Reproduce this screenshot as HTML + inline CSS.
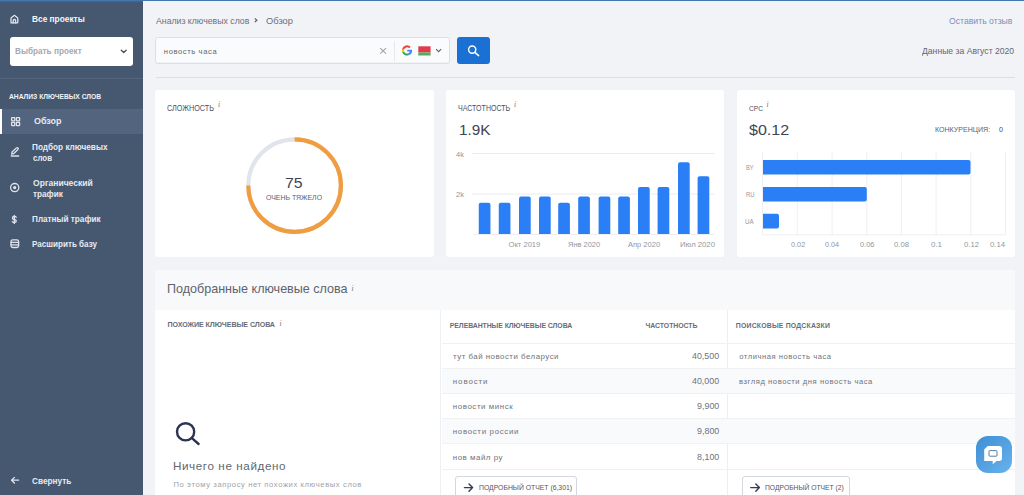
<!DOCTYPE html>
<html lang="ru">
<head>
<meta charset="utf-8">
<title>Обзор — Анализ ключевых слов</title>
<style>
*{box-sizing:border-box;margin:0;padding:0}
html,body{width:1024px;height:495px;overflow:hidden}
body{background:#f2f3f7;font-family:"Liberation Sans",sans-serif;position:relative}
.abs{position:absolute}
.t{position:absolute;white-space:nowrap;line-height:1;transform-origin:0 0}
#topline{left:0;top:0;width:1024px;height:1px;background:#4576b0;z-index:5}
#topline2{left:143px;top:1px;width:881px;height:1.5px;background:#e9f4fb;z-index:5}
#topline3{left:0;top:1px;width:143px;height:2px;background:linear-gradient(#3f68a0,#45556f);z-index:5}
#sidebar{left:0;top:0;width:143px;height:495px;background:#465770}
#sel{left:10px;top:37px;width:123px;height:28.5px;background:#fff;border-radius:3px}
#sdiv{left:0;top:77.5px;width:143px;height:1px;background:#55647e}
#active{left:0;top:108.5px;width:143px;height:25px;background:#53647e}
#activebar{left:0;top:108.5px;width:2px;height:25px;background:#fff}
#input{left:155.4px;top:37px;width:294.6px;height:27px;background:#fafbfc;border:1.4px solid #dcdfe4;border-radius:2.5px;box-shadow:inset 0 -1px 0 #f0f1f4}
#isep{left:394px;top:40.5px;width:1px;height:20px;background:#e6e8ec}
#sbtn{left:457px;top:36.8px;width:33px;height:27.6px;background:#1b71d3;border-radius:3px}
#hdiv{left:156px;top:76.5px;width:859px;height:1px;background:#dcdee3}
.card{position:absolute;top:89.5px;height:167.5px;background:#fff;border-radius:3px}
#card1{left:155px;width:279px}
#card2{left:445.5px;width:278.5px}
#card3{left:736.5px;width:278.5px}
#panel{left:155px;top:270px;width:860px;height:240px;background:#fff;border-radius:3px 3px 0 0}
#phead{left:155px;top:270px;width:860px;height:39.5px;background:#f8f9fb;border-radius:3px 3px 0 0}
#pv1{left:440px;top:309.5px;width:1.3px;height:200px;background:#eff0f3}
#pv2{left:726.8px;top:309.5px;width:1px;height:200px;background:#eceef2}
.row{position:absolute;height:25.2px}
.rg{background:#f9fafb}
.rl{position:absolute;height:1px;background:#f0f1f3}
.btn{position:absolute;top:476px;height:25px;border:1px solid #d3d7de;border-radius:3px;background:#fff}
#chat{left:975.8px;top:436.3px;width:36.4px;height:36.4px;border-radius:12px;background:linear-gradient(135deg,#3f8ed6,#67b3ec)}
svg{position:absolute;overflow:visible}
</style>
</head>
<body>
<div id="sidebar" class="abs"></div>
<div id="topline" class="abs"></div>
<div id="topline2" class="abs"></div>
<div id="topline3" class="abs"></div>
<div id="sel" class="abs"></div>
<div id="sdiv" class="abs"></div>
<div id="active" class="abs"></div>
<div id="activebar" class="abs"></div>

<!-- sidebar icons -->
<svg style="left:0;top:0" width="143" height="495" viewBox="0 0 143 495">
  <g fill="none" stroke="#dfe4ec" stroke-width="1.3" stroke-linecap="round" stroke-linejoin="round">
    <!-- home -->
    <path d="M11 22.9 V18.7 Q11 18 11.6 17.5 L13.8 15.7 Q14.4 15.2 15 15.7 L17.2 17.5 Q17.8 18 17.8 18.7 V22.3 Q17.8 22.9 17.2 22.9 H11.6 Q11 22.9 11 22.3"/>
    <path d="M13.2 22.9 V20.4 Q13.2 19.4 14.4 19.4 Q15.6 19.4 15.6 20.4 V22.9"/>
    <!-- chevron select -->
    <path d="M121.3 50.3 L123.7 52.6 L126.1 50.3" stroke="#4b4f58" stroke-width="1.4"/>
    <!-- grid -->
    <rect x="11.6" y="117.6" width="3.2" height="3.2" rx="0.6"/>
    <rect x="16.4" y="117.6" width="3.2" height="3.2" rx="0.6"/>
    <rect x="11.6" y="122.4" width="3.2" height="3.2" rx="0.6"/>
    <rect x="16.4" y="122.4" width="3.2" height="3.2" rx="0.6"/>
    <!-- pencil -->
    <path d="M11.6 154.2 L12.1 152 L16.4 147.9 Q17.3 147.2 18 148 Q18.6 148.8 17.9 149.5 L13.6 153.7 Z"/>
    <path d="M11.3 156 H18.6" stroke-width="1.5"/>
    <!-- circle -->
    <circle cx="14.7" cy="187.6" r="4.1"/>
    <circle cx="14.7" cy="187.6" r="1" fill="#dfe4ec"/>
    <!-- dollar -->
    <path d="M16.2 217.3 Q15.8 216.5 14.3 216.5 Q12.4 216.5 12.4 218 Q12.4 219.2 14.3 219.5 Q16.3 219.8 16.3 221.1 Q16.3 222.5 14.3 222.5 Q12.7 222.5 12.3 221.7"/>
    <path d="M14.3 215.4 V223.4"/>
    <!-- database -->
    <rect x="11" y="239.8" width="7.6" height="7.7" rx="1.8"/>
    <path d="M11 242.4 H18.6 M11 244.9 H18.6"/>
    <!-- back arrow -->
    <path d="M18.6 480.2 H11.6 M14.4 477.4 L11.6 480.2 L14.4 483"/>
  </g>
</svg>

<div id="input" class="abs"></div>
<div id="isep" class="abs"></div>
<div id="sbtn" class="abs"></div>
<svg style="left:0;top:0" width="1024" height="100" viewBox="0 0 1024 100">
  <!-- breadcrumb chevron -->
  <path d="M254.8 18.4 L256.9 20.2 L254.8 22" fill="none" stroke="#5d616a" stroke-width="1.2"/>
  <!-- clear x -->
  <path d="M380.2 48.1 L386 53.6 M386 48.1 L380.2 53.6" stroke="#a3a6ad" stroke-width="1.2"/>
  <!-- google G -->
  <g transform="translate(407 50.45)" fill="none" stroke-width="2">
    <path d="M4.1 -0.2 A4.1 4.1 0 0 1 1.3 3.9" stroke="#4285f4"/>
    <path d="M1.3 3.9 A4.1 4.1 0 0 1 -3.9 1.3" stroke="#34a853"/>
    <path d="M-3.9 1.3 A4.1 4.1 0 0 1 -3.9 -1.3" stroke="#fbbc05"/>
    <path d="M-3.9 -1.3 A4.1 4.1 0 0 1 2.9 -2.9" stroke="#ea4335"/>
    <path d="M0.2 0.2 H4.9" stroke="#4285f4" stroke-width="1.7"/>
  </g>
  <!-- flag BY -->
  <rect x="418.3" y="46.3" width="12.3" height="6.2" fill="#e33a4c"/>
  <rect x="418.3" y="52.5" width="12.3" height="3" fill="#52ad5c"/>
  <!-- chevron -->
  <path d="M436.1 49.2 L438.6 51.6 L441.1 49.2" fill="none" stroke="#5f636b" stroke-width="1.15"/>
  <!-- search icon white -->
  <circle cx="472.2" cy="49.6" r="3.6" fill="none" stroke="#fff" stroke-width="1.4"/>
  <path d="M474.9 52.4 L478.6 55.6" stroke="#fff" stroke-width="1.5" stroke-linecap="round"/>
</svg>
<div id="hdiv" class="abs"></div>

<div id="card1" class="card"></div>
<div id="card2" class="card"></div>
<div id="card3" class="card"></div>

<svg style="left:0;top:0" width="1024" height="270" viewBox="0 0 1024 270">
  <!-- info i's -->
  <g fill="#6b6f78" font-family="Liberation Serif" font-style="italic" font-size="7.5">
    <text x="218" y="107">i</text>
    <text x="514" y="107">i</text>
    <text x="766.5" y="107">i</text>
  </g>
  <!-- ring -->
  <circle cx="294.6" cy="185.6" r="46.3" fill="none" stroke="#e1e4ed" stroke-width="4.2"/>
  <path d="M294.6 139.3 A46.3 46.3 0 1 1 248.3 185.6" fill="none" stroke="#f09c3f" stroke-width="4.2"/>
  <!-- card2 grid -->
  <g stroke="#ebecef" stroke-width="1">
    <path d="M472 153.5 H714.5"/>
    <path d="M472 194.1 H714.5"/>
    <path d="M473.7 234.4 H714.5"/>
  </g>
  <g fill="#2b7ff6" id="bars">
  </g>
  <!-- card3 grid -->
  <g stroke="#eeeff2" stroke-width="1">
    <path d="M762.5 152.5 V234.8"/>
    <path d="M797.3 152.5 V234.8"/>
    <path d="M832.1 152.5 V234.8"/>
    <path d="M866.8 152.5 V234.8"/>
    <path d="M901.4 152.5 V234.8"/>
    <path d="M936.1 152.5 V234.8"/>
    <path d="M970.8 152.5 V234.8"/>
    <path d="M1005.5 152.5 V234.8"/>
    <path d="M762.5 234.8 H1005.5"/>
  </g>
  <g fill="#2b7ff6">
    <path d="M763 160 H968.5 Q970.5 160 970.5 162 V172.6 Q970.5 174.6 968.5 174.6 H763 Z"/>
    <path d="M763 186.9 H864.8 Q866.8 186.9 866.8 188.9 V199.5 Q866.8 201.5 864.8 201.5 H763 Z"/>
    <path d="M763 213.8 H777 Q779 213.8 779 215.8 V226.4 Q779 228.4 777 228.4 H763 Z"/>
  </g>
  <path fill="#2b7ff6" d="M478.75 234.00 V204.75 Q478.75 202.75 480.75 202.75 H488.45 Q490.45 202.75 490.45 204.75 V234.00 Z"/>
<path fill="#2b7ff6" d="M498.75 234.00 V204.75 Q498.75 202.75 500.75 202.75 H508.45 Q510.45 202.75 510.45 204.75 V234.00 Z"/>
<path fill="#2b7ff6" d="M519.00 234.00 V198.50 Q519.00 196.50 521.00 196.50 H528.70 Q530.70 196.50 530.70 198.50 V234.00 Z"/>
<path fill="#2b7ff6" d="M539.00 234.00 V198.50 Q539.00 196.50 541.00 196.50 H548.70 Q550.70 196.50 550.70 198.50 V234.00 Z"/>
<path fill="#2b7ff6" d="M558.20 234.00 V204.75 Q558.20 202.75 560.20 202.75 H567.90 Q569.90 202.75 569.90 204.75 V234.00 Z"/>
<path fill="#2b7ff6" d="M578.20 234.00 V198.50 Q578.20 196.50 580.20 196.50 H587.90 Q589.90 196.50 589.90 198.50 V234.00 Z"/>
<path fill="#2b7ff6" d="M598.60 234.00 V198.50 Q598.60 196.50 600.60 196.50 H608.30 Q610.30 196.50 610.30 198.50 V234.00 Z"/>
<path fill="#2b7ff6" d="M618.20 234.00 V198.50 Q618.20 196.50 620.20 196.50 H627.90 Q629.90 196.50 629.90 198.50 V234.00 Z"/>
<path fill="#2b7ff6" d="M638.00 234.00 V188.90 Q638.00 186.90 640.00 186.90 H647.70 Q649.70 186.90 649.70 188.90 V234.00 Z"/>
<path fill="#2b7ff6" d="M657.60 234.00 V188.90 Q657.60 186.90 659.60 186.90 H667.30 Q669.30 186.90 669.30 188.90 V234.00 Z"/>
<path fill="#2b7ff6" d="M678.00 234.00 V164.30 Q678.00 162.30 680.00 162.30 H687.70 Q689.70 162.30 689.70 164.30 V234.00 Z"/>
<path fill="#2b7ff6" d="M697.60 234.00 V178.25 Q697.60 176.25 699.60 176.25 H707.30 Q709.30 176.25 709.30 178.25 V234.00 Z"/>
</svg>

<div id="panel" class="abs"></div>
<div id="phead" class="abs"></div>
<div id="pv1" class="abs"></div>
<div id="pv2" class="abs"></div>
<div class="row" style="left:441.5px;top:343.0px;width:573.5px"></div>
<div class="row rg" style="left:441.5px;top:368.2px;width:573.5px"></div>
<div class="row" style="left:441.5px;top:393.4px;width:573.5px"></div>
<div class="row rg" style="left:441.5px;top:418.6px;width:573.5px"></div>
<div class="row" style="left:441.5px;top:443.8px;width:573.5px"></div>
<div class="rl" style="left:441.5px;top:342.5px;width:573.5px"></div>
<div class="rl" style="left:441.5px;top:367.7px;width:573.5px"></div>
<div class="rl" style="left:441.5px;top:392.9px;width:573.5px"></div>
<div class="rl" style="left:441.5px;top:418.1px;width:573.5px"></div>
<div class="rl" style="left:441.5px;top:443.3px;width:573.5px"></div>
<div class="rl" style="left:441.5px;top:468.5px;width:573.5px"></div>
<div class="btn" style="left:454.8px;width:122.7px"></div>
<div class="btn" style="left:741.6px;width:108.4px"></div>
<svg style="left:0;top:270px" width="1024" height="225" viewBox="0 270 1024 225">
  <g fill="#6b6f78" font-family="Liberation Serif" font-style="italic" font-size="7.5">
    <text x="351.5" y="291">i</text>
    <text x="279.5" y="325.5">i</text>
  </g>
  <!-- empty search icon -->
  <circle cx="185.6" cy="431.8" r="8.6" fill="none" stroke="#2b3350" stroke-width="2.4"/>
  <path d="M191.9 438.2 L198.6 444" stroke="#2b3350" stroke-width="2.4" stroke-linecap="round"/>
  <!-- arrows -->
  <g fill="none" stroke="#333b55" stroke-width="1.4" stroke-linecap="round" stroke-linejoin="round">
    <path d="M464.4 487.6 H472.6 M469 484 L472.6 487.6 L469 491.2"/>
    <path d="M750.7 487.6 H759.4 M755.8 484 L759.4 487.6 L755.8 491.2"/>
  </g>
</svg>
<div id="chat" class="abs"></div>
<svg style="left:0;top:0" width="1024" height="495" viewBox="0 0 1024 495">
  <path d="M987.6 446 H999.3 Q1002 446 1002 448.7 V458.2 Q1002 460.9 999.3 460.9 H996.6 L992.7 464.2 V460.9 H984.2 V449.4 Z" fill="#fff"/>
  <rect x="989" y="450.6" width="8" height="5.6" rx="0.8" fill="none" stroke="#5b7ca3" stroke-width="1"/>
</svg>
<div class="t" id="s_all" style="left:32.43px;top:14.91px;font-size:8.60px;color:#f4f6fa;font-weight:700;transform:scaleX(0.9681)">Все проекты</div>
<div class="t" id="s_sel" style="left:15.02px;top:47.00px;font-size:8.80px;color:#a6a9b0;font-weight:700;transform:scaleX(0.9336)">Выбрать проект</div>
<div class="t" id="s_head" style="left:9.00px;top:93.41px;font-size:7.20px;color:#f1f3f7;font-weight:700;transform:scaleX(0.9318)">АНАЛИЗ КЛЮЧЕВЫХ СЛОВ</div>
<div class="t" id="s_obz" style="left:33.84px;top:117.41px;font-size:8.60px;color:#e6eaf0;font-weight:700;transform:scaleX(1.0410)">Обзор</div>
<div class="t" id="s_pod1" style="left:32.08px;top:143.25px;font-size:8.60px;color:#e6eaf0;font-weight:700;transform:scaleX(0.9554)">Подбор ключевых</div>
<div class="t" id="s_pod2" style="left:32.94px;top:154.20px;font-size:8.60px;color:#e6eaf0;font-weight:700;transform:scaleX(0.9250)">слов</div>
<div class="t" id="s_org1" style="left:32.86px;top:179.25px;font-size:8.60px;color:#e6eaf0;font-weight:700;transform:scaleX(0.9958)">Органический</div>
<div class="t" id="s_org2" style="left:32.95px;top:190.20px;font-size:8.60px;color:#e6eaf0;font-weight:700;transform:scaleX(0.9516)">трафик</div>
<div class="t" id="s_plat" style="left:32.01px;top:215.00px;font-size:8.60px;color:#e6eaf0;font-weight:700;transform:scaleX(0.9512)">Платный трафик</div>
<div class="t" id="s_ras" style="left:32.12px;top:240.00px;font-size:8.60px;color:#e6eaf0;font-weight:700;transform:scaleX(0.9416)">Расширить базу</div>
<div class="t" id="s_sv" style="left:31.78px;top:476.75px;font-size:8.60px;color:#e6eaf0;font-weight:700;transform:scaleX(0.9571)">Свернуть</div>
<div class="t" id="bc1" style="left:155.72px;top:16.01px;font-size:9.40px;color:#6c7078;font-weight:400;transform:scaleX(0.9300)">Анализ ключевых слов</div>
<div class="t" id="bc2" style="left:266.25px;top:16.01px;font-size:9.40px;color:#6b6f78;font-weight:400;transform:scaleX(0.9944)">Обзор</div>
<div class="t" id="fb" style="left:948.92px;top:16.01px;font-size:9.40px;color:#7d8fc0;font-weight:400;transform:scaleX(0.9233)">Оставить отзыв</div>
<div class="t" id="q" style="left:163.85px;top:48.21px;font-size:7.60px;color:#63676f;font-weight:400;letter-spacing:0.605px">новость часа</div>
<div class="t" id="date" style="left:922.18px;top:47.30px;font-size:9.20px;color:#62666e;font-weight:400;transform:scaleX(0.9376)">Данные за Август 2020</div>
<div class="t" id="c1t" style="left:166.81px;top:104.71px;font-size:8.20px;color:#4c5160;font-weight:400;transform:scaleX(0.8868)">СЛОЖНОСТЬ</div>
<div class="t" id="c1n" style="left:285.20px;top:176.11px;font-size:14.60px;color:#3e4457;font-weight:400;transform:scaleX(1.0874)">75</div>
<div class="t" id="c1s" style="left:265.75px;top:194.11px;font-size:7.00px;color:#5c6170;font-weight:400;transform:scaleX(0.9911)">ОЧЕНЬ ТЯЖЕЛО</div>
<div class="t" id="c2t" style="left:458.07px;top:105.11px;font-size:8.20px;color:#4c5160;font-weight:400;transform:scaleX(0.8611)">ЧАСТОТНОСТЬ</div>
<div class="t" id="c2n" style="left:458.50px;top:122.90px;font-size:14.00px;color:#3e4457;font-weight:400;transform:scaleX(1.0909)">1.9K</div>
<div class="t" id="c2y4" style="left:455.99px;top:150.91px;font-size:7.20px;color:#93969d;font-weight:400;transform:scaleX(1.0345)">4k</div>
<div class="t" id="c2y2" style="left:456.08px;top:191.25px;font-size:7.20px;color:#93969d;font-weight:400;transform:scaleX(1.0702)">2k</div>
<div class="t" id="c2x1" style="left:508.50px;top:240.91px;font-size:7.60px;color:#93969d;font-weight:400">Окт 2019</div>
<div class="t" id="c2x2" style="left:568.01px;top:240.91px;font-size:7.60px;color:#93969d;font-weight:400;transform:scaleX(0.9830)">Янв 2020</div>
<div class="t" id="c2x3" style="left:627.67px;top:240.91px;font-size:7.60px;color:#93969d;font-weight:400;transform:scaleX(0.9909)">Апр 2020</div>
<div class="t" id="c2x4" style="left:680.14px;top:240.91px;font-size:7.60px;color:#93969d;font-weight:400;transform:scaleX(1.0149)">Июл 2020</div>
<div class="t" id="c3t" style="left:748.83px;top:104.92px;font-size:7.80px;color:#4c5160;font-weight:400;transform:scaleX(0.8511)">CPC</div>
<div class="t" id="c3n" style="left:748.70px;top:122.90px;font-size:14.00px;color:#3e4457;font-weight:400;transform:scaleX(1.1471)">$0.12</div>
<div class="t" id="c3k" style="left:934.97px;top:126.91px;font-size:6.60px;color:#5c6170;font-weight:400;transform:scaleX(1.0693)">КОНКУРЕНЦИЯ:</div>
<div class="t" id="c3z" style="left:998.97px;top:126.91px;font-size:6.60px;color:#3e4457;font-weight:400;transform:scaleX(1.0769)">0</div>
<div class="t" id="c3by" style="left:746.24px;top:165.01px;font-size:6.60px;color:#93969d;font-weight:400;transform:scaleX(0.8718)">BY</div>
<div class="t" id="c3ru" style="left:745.60px;top:191.91px;font-size:6.60px;color:#93969d;font-weight:400;transform:scaleX(0.8723)">RU</div>
<div class="t" id="c3ua" style="left:744.78px;top:218.76px;font-size:6.60px;color:#93969d;font-weight:400;transform:scaleX(0.9412)">UA</div>
<div class="t" id="c3x1" style="left:790.83px;top:240.91px;font-size:7.60px;color:#93969d;font-weight:400;transform:scaleX(0.9649)">0.02</div>
<div class="t" id="c3x2" style="left:825.37px;top:240.91px;font-size:7.60px;color:#93969d;font-weight:400;transform:scaleX(0.9517)">0.04</div>
<div class="t" id="c3x3" style="left:859.53px;top:240.91px;font-size:7.60px;color:#93969d;font-weight:400;transform:scaleX(0.9726)">0.06</div>
<div class="t" id="c3x4" style="left:893.75px;top:240.91px;font-size:7.60px;color:#93969d;font-weight:400;transform:scaleX(1.0175)">0.08</div>
<div class="t" id="c3x5" style="left:931.01px;top:240.91px;font-size:7.60px;color:#93969d;font-weight:400;transform:scaleX(1.0410)">0.1</div>
<div class="t" id="c3x6" style="left:963.95px;top:240.91px;font-size:7.60px;color:#93969d;font-weight:400;transform:scaleX(1.0149)">0.12</div>
<div class="t" id="c3x7" style="left:990.49px;top:240.91px;font-size:7.60px;color:#93969d;font-weight:400;transform:scaleX(1.0175)">0.14</div>
<div class="t" id="b_h" style="left:166.99px;top:283.25px;font-size:12.40px;color:#5e636d;font-weight:400;transform:scaleX(1.0127)">Подобранные ключевые слова</div>
<div class="t" id="b_sim" style="left:167.50px;top:322.00px;font-size:7.10px;color:#676c78;font-weight:700;letter-spacing:-0.067px">ПОХОЖИЕ КЛЮЧЕВЫЕ СЛОВА</div>
<div class="t" id="b_no" style="left:173.00px;top:461.01px;font-size:10.60px;color:#62666f;font-weight:400;letter-spacing:0.541px;transform:scaleX(1.1000)">Ничего не найдено</div>
<div class="t" id="b_no2" style="left:173.50px;top:481.00px;font-size:7.60px;color:#a0a3aa;font-weight:400;letter-spacing:0.610px">По этому запросу нет похожих ключевых слов</div>
<div class="t" id="b_rel" style="left:449.80px;top:323.00px;font-size:6.90px;color:#676c78;font-weight:700;letter-spacing:-0.064px">РЕЛЕВАНТНЫЕ КЛЮЧЕВЫЕ СЛОВА</div>
<div class="t" id="b_fr" style="left:645.50px;top:323.00px;font-size:6.90px;color:#676c78;font-weight:700;letter-spacing:-0.040px">ЧАСТОТНОСТЬ</div>
<div class="t" id="b_sug" style="left:735.85px;top:323.00px;font-size:6.90px;color:#676c78;font-weight:700;letter-spacing:0.181px">ПОИСКОВЫЕ ПОДСКАЗКИ</div>
<div class="t" id="r0k" style="left:453.05px;top:352.75px;font-size:7.90px;color:#6f737b;font-weight:400;letter-spacing:0.489px">тут бай новости беларуси</div>
<div class="t" id="r0n" style="left:691.99px;top:351.75px;font-size:8.60px;color:#6f737b;font-weight:400;transform:scaleX(1.0291)">40,500</div>
<div class="t" id="r1k" style="left:452.80px;top:377.75px;font-size:7.90px;color:#6f737b;font-weight:400;letter-spacing:0.917px">новости</div>
<div class="t" id="r1n" style="left:691.99px;top:376.75px;font-size:8.60px;color:#6f737b;font-weight:400;transform:scaleX(1.0291)">40,000</div>
<div class="t" id="r2k" style="left:452.80px;top:402.91px;font-size:7.90px;color:#6f737b;font-weight:400;letter-spacing:0.583px">новости минск</div>
<div class="t" id="r2n" style="left:697.23px;top:401.91px;font-size:8.60px;color:#6f737b;font-weight:400;transform:scaleX(1.0361)">9,900</div>
<div class="t" id="r3k" style="left:452.80px;top:427.91px;font-size:7.90px;color:#6f737b;font-weight:400;letter-spacing:0.673px">новости россии</div>
<div class="t" id="r3n" style="left:697.23px;top:426.91px;font-size:8.60px;color:#6f737b;font-weight:400;transform:scaleX(1.0361)">9,800</div>
<div class="t" id="r4k" style="left:452.80px;top:453.50px;font-size:7.90px;color:#6f737b;font-weight:400;letter-spacing:0.525px">нов майл ру</div>
<div class="t" id="r4n" style="left:697.23px;top:452.50px;font-size:8.60px;color:#6f737b;font-weight:400;transform:scaleX(1.0361)">8,100</div>
<div class="t" id="s0" style="left:739.25px;top:352.75px;font-size:7.60px;color:#6f737b;font-weight:400;letter-spacing:0.550px">отличная новость часа</div>
<div class="t" id="s1" style="left:739.00px;top:377.75px;font-size:7.60px;color:#6f737b;font-weight:400;letter-spacing:0.567px">взгляд новости дня новость часа</div>
<div class="t" id="btn1" style="left:478.96px;top:485.31px;font-size:6.80px;color:#4f5564;font-weight:400;transform:scaleX(1.0055)">ПОДРОБНЫЙ ОТЧЕТ (6,301)</div>
<div class="t" id="btn2" style="left:765.02px;top:485.31px;font-size:6.80px;color:#4f5564;font-weight:400;transform:scaleX(0.9936)">ПОДРОБНЫЙ ОТЧЕТ (2)</div>
</body>
</html>
